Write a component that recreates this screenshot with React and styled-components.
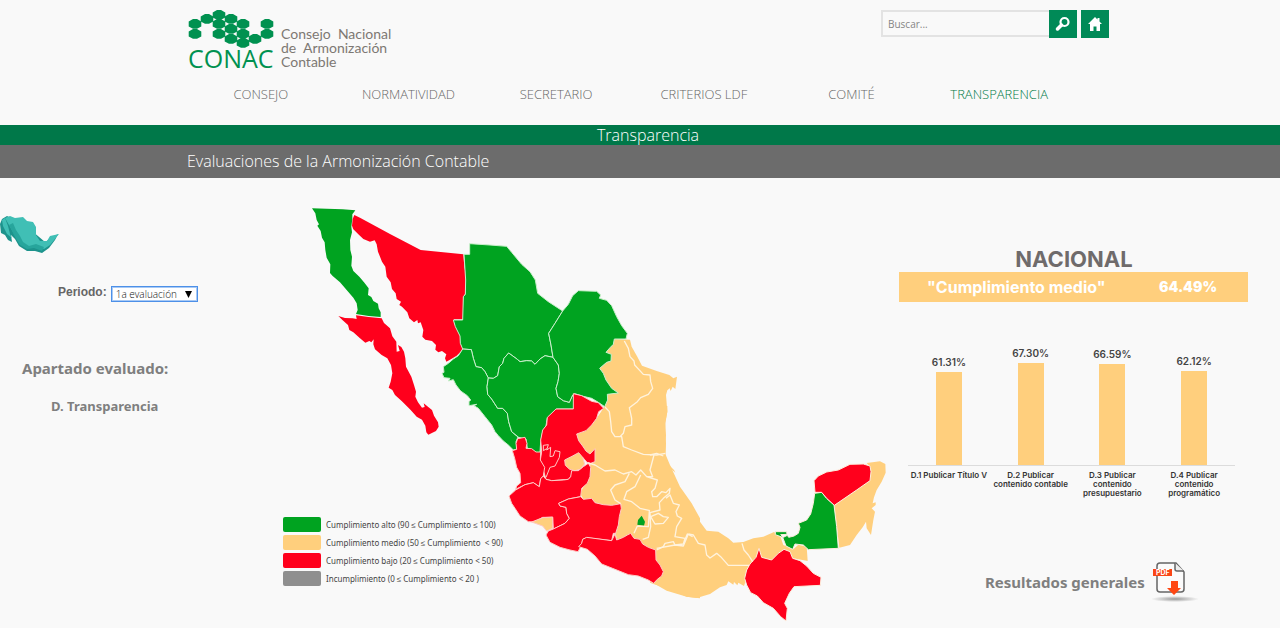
import React, { useState } from 'react'
import styled, { createGlobalStyle } from 'styled-components'

const GREEN = '#00a320'
const AMBER = '#ffcf7d'
const RED = '#ff001c'
const GREY = '#8f8f8f'

const GlobalStyle = createGlobalStyle`
  * { box-sizing: border-box; }

  body {
    margin: 0;
    background: #f9f9f9;
    color: #777;
    font-family: 'Open Sans', 'Noto Sans', sans-serif;
  }
`;

const Container = styled.div`
  max-width: 922px;
  margin: 0 auto;
`;

const HeaderStyles = styled.header`
  padding: 10px 0 0 16px;
  height: 125px;

  .top {
    display: flex;
    justify-content: space-between;
    align-items: flex-start;
  }
`;

const LogoLink = styled.a`
  display: flex;
  align-items: flex-end;
  gap: 7px;
  padding-left: 1px;
  text-decoration: none;
`;

const LogoMark = styled.span`
  display: flex;
  flex-direction: column;
  color: #009150;
  font-size: 25px;
  line-height: 21px;

  svg { display: block; }
`;

const LogoText = styled.span`
  padding-top: 17px;
  color: #7d7873;
  font-family: Lato, sans-serif;
  font-size: 14px;
  line-height: 14px;
  white-space: pre;
`;

const SearchForm = styled.form`
  display: flex;
  align-items: flex-start;

  input {
    width: 168px;
    height: 27px;
    padding: 0 5px;
    border: 2px solid #e3e3e3;
    border-right: 0;
    background: #f9f9f9;
    color: #777;
    font: 10px 'Open Sans', sans-serif;
  }

  input::placeholder { color: #858585; }
`;

const IconButton = styled.button`
  display: flex;
  align-items: center;
  justify-content: center;
  width: 28px;
  height: 28px;
  margin-right: ${props => props.$spaced ? '4px' : '0'};
  padding: 0;
  border: 0;
  background: #008a57;
  cursor: pointer;
`;

const Nav = styled.nav`
  display: grid;
  grid-template-columns: repeat(6, 1fr);
  margin: 15px 36px 0 0;
`;

const NavLink = styled.a`
  color: ${props => props.$active ? '#007a48' : '#666'};
  font-size: 13px;
  font-weight: 300;
  line-height: 20px;
  text-align: center;
  text-decoration: none;
`;

const TitleBar = styled.div`
  padding-left: 16px;
  background: #007849;
  color: #fff;
  font-size: 16px;
  font-weight: 300;
  line-height: 20px;
  text-align: center;
`;

const SubtitleBar = styled.div`
  padding-left: 16px;
  background: #6c6c6c;
  color: #fff;

  h1 {
    margin: 0;
    font-size: 16px;
    font-weight: 300;
    line-height: 33px;
  }
`;

const Main = styled.main`
  display: grid;
  grid-template-columns: 280px 1fr 380px;
`;

const Sidebar = styled.aside`
  padding-top: 37px;

  > svg { display: block; }

  h2 {
    margin: 56px 0 0 22px;
    color: #7f7f7f;
    font-family: 'Noto Sans', sans-serif;
    font-size: 15px;
    line-height: 20px;
  }

  p {
    margin: 20px 0 0 51px;
    color: #7f7f7f;
    font-family: 'Noto Sans', sans-serif;
    font-size: 13px;
    font-weight: bold;
    line-height: 16px;
  }
`;

const Period = styled.div`
  display: flex;
  align-items: flex-start;
  gap: 4px;
  margin: 26px 0 0 58px;

  label {
    color: #666;
    font: bold 12px/18px 'Liberation Sans', sans-serif;
  }
`;

const SelectBox = styled.div`
  position: relative;
  margin-top: 3px;

  select {
    display: block;
    width: 87px;
    height: 16px;
    padding: 0 4px;
    border: 1px solid #4d90e8;
    border-radius: 0;
    outline: 1px solid #a9caf5;
    outline-offset: -2px;
    background: #fff;
    color: #111;
    font: 300 10px/14px 'Open Sans', sans-serif;
    appearance: none;
  }

  svg {
    position: absolute;
    top: 5px;
    right: 6px;
    pointer-events: none;
  }
`;

const MapArea = styled.section`
  display: grid;
  align-content: start;
  padding-top: 22px;

  > * { grid-area: 1 / 1; }
  > svg { display: block; width: 100%; }
`;

const Legend = styled.ul`
  align-self: end;
  margin: 0 0 41px 3px;
  padding: 0;
  list-style: none;
  justify-self: start;

  li {
    display: flex;
    align-items: center;
    gap: 5px;
    height: 18px;
    color: #444;
    font: 8px 'Noto Sans', sans-serif;
    white-space: pre;
  }
`;

const Swatch = styled.span`
  width: 38px;
  height: 15px;
  border-radius: 2px;
  background: ${props => props.$color};
`;

const Results = styled.section`
  padding: 68px 32px 0 0;
  font-family: Inter, sans-serif;

  h2 {
    margin: 0;
    color: #6f6b6b;
    font-size: 22px;
    line-height: 26px;
    text-align: center;
  }
`;

const Banner = styled.div`
  display: flex;
  justify-content: space-between;
  padding: 0 31px 0 28px;
  margin-left: -1px;
  background: ${AMBER};
  color: #fff;
  font-size: 16px;
  font-weight: 700;
  line-height: 30px;

  strong { font-size: 14px; }
`;

const Chart = styled.div`
  display: grid;
  grid-template-columns: repeat(4, 1fr);
  margin: 11px 13px 0 8px;
`;

const Plot = styled.div`
  display: flex;
  flex-direction: column;
  align-items: center;
  justify-content: flex-end;
  height: 153px;
  border-bottom: 1px solid #dcdcdc;
  color: #444;
  font-size: 10px;
  font-weight: 600;
  line-height: 20px;
`;

const Bar = styled.div`
  width: 26px;
  background: ${AMBER};
`;

const BarLabel = styled.div`
  padding-top: 5px;
  color: #333;
  font-size: 8px;
  font-weight: 600;
  line-height: 9px;
  text-align: center;
  white-space: pre-line;
`;

const ReportLink = styled.a`
  display: flex;
  align-items: center;
  gap: 4px;
  margin: 62px 0 0 85px;
  color: #7f7f7f;
  font: bold 15px 'Noto Sans', sans-serif;
  text-decoration: none;

  svg { flex: none; }
`;

const hexagons = [
  [7, 14], [7, 24], [19, 9], [31, 5], [31, 14], [31, 24], [43, 9], [43, 19], [43, 29],
  [55, 14], [55, 24], [55, 33], [67, 29], [79, 14], [79, 24]
]

const sections = ['CONSEJO', 'NORMATIVIDAD', 'SECRETARIO', 'CRITERIOS LDF', 'COMITÉ', 'TRANSPARENCIA']

const levels = [
  { color: GREEN, text: 'Cumplimiento alto (90 ≤ Cumplimiento ≤ 100)' },
  { color: AMBER, text: 'Cumplimiento medio (50 ≤ Cumplimiento  < 90)' },
  { color: RED, text: 'Cumplimiento bajo (20 ≤ Cumplimiento < 50)' },
  { color: GREY, text: 'Incumplimiento (0 ≤ Cumplimiento < 20 )' }
]

const indicators = [
  { value: 61.31, text: 'D.1 Publicar Título V' },
  { value: 67.3, text: 'D.2 Publicar\ncontenido contable' },
  { value: 66.59, text: 'D.3 Publicar\ncontenido\npresupuestario' },
  { value: 62.12, text: 'D.4 Publicar\ncontenido\nprogramático' }
]

function Header() {
  return (
    <HeaderStyles>
      <Container>
        <div className="top">
          <LogoLink href="#" aria-label="CONAC">
            <LogoMark>
              <svg width="86" height="38" viewBox="0 0 86 38" fill="#009150">
                {hexagons.map(([x, y]) => (
                  <path key={`${x}-${y}`} d={`M${x - 2} ${y - 5}h4l4.300 2.500v5l-4.300 2.300h-4l-4.300 -2.300v-5z`} />
                ))}
              </svg>
              CONAC
            </LogoMark>
            <LogoText>{'Consejo  Nacional\nde  Armonización\nContable'}</LogoText>
          </LogoLink>

          <SearchForm onSubmit={e => e.preventDefault()}>
            <input type="text" placeholder="Buscar..." aria-label="Buscar" />
            <IconButton type="submit" aria-label="Buscar" $spaced>
              <svg width="16" height="16" viewBox="0 0 16 16" fill="none" stroke="#fff">
                <circle cx="9.500" cy="6" r="4" strokeWidth="2.200" />
                <path d="M6.500 9L2.500 13" strokeWidth="3.500" strokeLinecap="round" />
              </svg>
            </IconButton>
            <IconButton type="button" aria-label="Inicio">
              <svg width="16" height="16" viewBox="0 0 16 16" fill="#fff">
                <path d="M8 1L1 8h2v7h3.500v-4.500h3V15H13V8h2l-2.500-2.500V2h-2v1.500z" />
              </svg>
            </IconButton>
          </SearchForm>
        </div>

        <Nav>
          {sections.map(name => (
            <NavLink key={name} href="#" $active={name === 'TRANSPARENCIA'}>{name}</NavLink>
          ))}
        </Nav>
      </Container>
    </HeaderStyles>
  )
}

// Each group keeps its own origin, three units to the pixel.
function MexicoMap() {
  return (
    <svg viewBox="840 600 1860 1284" strokeLinejoin="round" role="img" aria-label="Mapa de México">
      {/* amber states */}
      <g fill={AMBER}>
        <path transform="translate(1290 705)" d="M553 312L600 314L605 335L622 365L636 392L680 408L718 420L730 430L741 425L736 462L728 455L722 468L719 460L712 466L708 480L712 530L706 560L704 600L708 625L706 665L500 665L450 610L440 597L495 565L524 515L533 495L532 478L565 474L545 460L528 435L520 415L509 400L530 382L543 378L544 358L528 352L540 338L550 328Z" />
        <path transform="translate(1500 1140)" d="M315 78L502 78L502 95L496 130L498 165L496 222L510 255L540 320L575 370L600 415L600 655L560 650L500 632L461 610L440 560L350 482L347 455L364 372L335 376L310 374L285 368L275 355L250 358L240 340L262 300L272 250L285 245L285 206L270 222L258 213L248 198L236 182L230 162L258 152L290 115Z" />
        <path transform="translate(1950 1320)" d="M0 0L45 0L45 30L40 42L60 95L90 148L125 195L135 225L170 272L205 275L235 295L250 308L280 306L310 295L340 290L372 276L392 292L400 315L430 328L445 314L470 320L473 363L430 355L340 380L295 378L288 420L282 438L265 428L262 436L252 426L250 434L235 424L230 435L210 442L180 462L140 474L110 470L60 448L10 432L0 428Z" />
        <path transform="translate(1950 1320)" d="M650 69L690 64L706 72L707 98L695 125L680 150L672 172L668 190L677 187L677 195L665 205L675 215L670 240L663 285L650 265L648 245L638 262L620 285L600 315L568 323L553 196L620 150L660 122L660 80Z" />
        <path transform="translate(1950 1320)" d="M52 70L72 90L76 98L60 84Z" />
      </g>

      {/* north-west */}
      <g transform="translate(900 585)">
        <path fill={GREEN} d="M36 40L80 41L128 43L166 46L157 58L157 72L154 95L156 112L150 135L151 165L156 185L154 212L160 228L178 245L192 262L206 280L204 300L214 306L220 318L234 326L236 340L242 352L242 366L206 363L168 357L173 345L170 325L160 308L140 285L120 262L98 243L90 234L91 208L80 188L76 165L74 142L66 128L62 108L52 92L57 88L50 75L46 55Z" />
        <path fill={RED} d="M115 363L135 369L158 370L170 372L168 361L206 366L245 370L252 384L270 400L277 424L289 440L290 470L299 468L294 450L304 456L312 470L316 490L318 515L334 545L342 570L348 590L346 605L354 622L366 638L374 636L371 625L382 634L396 645L402 662L414 682L416 695L408 708L385 719L379 712L376 692L366 674L350 665L332 645L305 618L285 600L277 585L266 578L272 560L277 535L273 510L262 490L245 480L225 463L220 448L221 433L214 442L208 438L196 443L180 430L160 412L148 405L144 390L128 376Z" />
        <path fill={RED} d="M158 72L163 60L180 68L270 117L362 165L490 178L493 215L498 240L497 270L495 296L490 305L490 373L462 373L462 385L472 400L480 420L482 446L489 459L482 470L470 482L450 494L439 500L435 490L439 478L426 468L415 472L406 464L408 450L396 438L376 434L367 425L370 405L362 382L354 385L352 375L342 382L328 370L322 352L306 335L298 330L303 320L290 312L287 295L276 282L272 262L260 245L256 215L246 200L234 170L230 148L224 136L210 140L190 132L175 118L160 103L156 92Z" />
      </g>

      {/* north */}
      <g transform="translate(1290 705)" fill={GREEN} stroke="#c9efcb" strokeWidth="3">
        <path d="M119 26L180 30L230 34L245 52L275 88L300 110L316 135L323 175L355 200L398 228L375 265L356 295L363 330L369 367L345 362L330 372L315 388L305 378L290 377L270 380L262 373L236 354L222 370L218 385L208 395L203 422L190 430L175 429L165 410L155 398L138 395L130 370L124 344L98 342L91 325L90 303L76 275L70 255L98 255L100 185L106 178L107 135L102 58L119 58Z" />
        <path d="M98 342L124 344L130 370L138 395L155 398L165 410L175 429L171 455L173 478L185 492L203 520L218 520L232 535L236 560L245 590L264 606L258 620L262 642L250 645L235 630L220 618L205 602L195 590L185 570L165 545L145 520L132 512L140 508L117 512L117 500L122 495L112 482L92 468L78 450L70 434L55 438L60 430L42 428L36 415L42 412L40 395L55 385L70 372L85 362Z" />
        <path d="M175 429L190 430L203 422L208 395L218 385L222 370L236 354L262 373L270 380L290 377L305 378L315 388L330 372L345 362L369 367L385 390L388 415L384 440L378 460L383 485L400 497L418 502L428 480L434 476L437 522L380 522L352 548L348 572L338 590L332 620L330 652L318 655L305 645L292 640L288 612L266 607L245 590L236 560L232 535L218 520L203 520L185 492L173 478L171 455Z" />
        <path d="M398 228L415 208L428 182L445 167L500 169L512 180L508 190L530 196L545 212L560 245L575 272L592 295L588 312L553 312L550 328L540 338L528 352L544 358L543 378L530 382L509 400L520 415L528 435L545 460L565 474L532 478L533 495L524 515L505 502L485 490L460 484L434 476L428 480L418 502L400 497L383 485L378 460L384 440L388 415L385 390L369 367L363 330L356 295L375 265Z" />
      </g>

      {/* west and centre */}
      <g transform="translate(1500 1140)" fill={RED} stroke="#ffc9c4" strokeWidth="3">
        <path d="M220 41L245 47L275 64L295 68L311 85L296 95L290 115L275 135L258 152L230 162L236 182L248 198L258 213L270 222L285 206L285 245L272 250L262 248L248 232L212 290L205 298L155 302L138 298L121 240L125 215L122 180L128 150L140 135L142 112L168 87L220 87Z" />
        <path d="M53 176L75 172L81 190L78 205L95 206L108 216L122 216L121 240L134 262L130 288L122 296L118 320L100 308L75 314L47 328L50 318L62 308L60 280L50 262L44 235L37 212L50 208L48 190Z" />
        <path d="M118 320L122 296L130 288L138 298L155 302L190 300L205 298L212 290L215 272L235 272L250 260L265 250L272 262L270 290L262 310L245 325L242 350L205 357L176 370L180 378L198 382L200 400L208 415L195 430L160 447L158 412L128 412L105 426L85 425L60 408L45 385L35 370L27 348L47 330L75 314L100 308Z" />
        <path d="M138 465L145 453L160 447L195 430L208 415L200 400L198 382L180 378L176 370L205 357L242 350L250 358L275 355L285 368L310 374L335 376L362 371L364 385L358 410L355 435L347 460L340 460L335 482L260 473L248 478L245 495L234 515L210 510L180 502L150 487Z" />
        <path d="M236 500L245 490L248 478L260 472L335 482L345 462L350 480L370 472L382 465L392 460L402 475L420 478L428 492L445 502L467 510L468 540L480 555L490 575L485 588L472 598L461 610L445 600L415 588L385 584L345 568L305 552L285 528L262 508Z" />
        <path fill={AMBER} d="M95 426L128 413L158 411L158 445L140 453L128 438Z" />
        <path fill={AMBER} d="M194 240L216 229L236 218L248 232L254 252L240 268L225 272L209 268L196 256Z" />
        <path fill="none" d="M138 292L150 262L165 258L178 232L180 215L165 212L160 228L150 230L152 202L140 210L145 194L130 196L130 212L140 206" />
        <path fill={GREEN} stroke="none" d="M425 407L435 425L432 437L412 434L414 420Z" />
      </g>

      {/* south-east */}
      <g transform="translate(1950 1320)" stroke="#fdeedd" strokeWidth="3">
        <path fill={RED} d="M327 325L335 352L365 360L385 340L402 328L420 335L428 355L450 362L470 378L490 400L513 412L511 436L432 440L418 460L404 490L412 505L408 543L392 530L370 505L340 488L322 468L302 458L290 435L284 415L290 390L300 372L318 352Z" />
        <path fill={GREEN} d="M494 160L515 157L530 175L552 195L560 260L565 325L475 329L460 315L435 312L428 328L408 318L398 292L376 284L376 275L410 275L411 283L392 284L400 292L412 286L416 292L432 288L445 280L450 262L445 250L470 240L482 222L490 190Z" />
        <path fill={RED} d="M492 122L505 108L530 96L565 90L600 73L640 72L660 78L663 95L660 122L620 150L553 196L530 175L515 157L495 157Z" />
      </g>

      {/* borders between amber states */}
      <g fill="none" stroke="#fff3de" strokeWidth="4">
        <path transform="translate(1290 705)" d="M583 318L595 340L600 365L612 378L614 390L640 418L660 420L662 440L668 460L655 478L632 488L622 500L598 518L605 550L605 570L585 575L580 595L570 605M525 516L538 530L542 560L545 590L555 605L575 605L580 635L605 645L640 658L680 660L706 655" />
        <path transform="translate(1500 1140)" d="M262 248L285 255L315 273L345 270L370 282L395 275L408 285L422 270L440 290L458 290L450 270L462 225M388 280L375 305L345 315L332 330L345 360L362 371M422 285L405 320L380 335L372 358L395 365L420 385L450 392M440 290L472 300L465 325L455 335L458 350L470 350L485 335L498 338L510 325L508 340L490 355L478 368L480 390L450 398L452 440L445 472L428 478M498 355L510 345L520 370L538 375L528 395L532 408L545 415L530 440L525 470L555 475L550 492L525 495L520 485L495 490L490 500L470 510M550 492L562 462L578 470M452 410L475 400L490 410L505 412L490 430L465 432ZM412 438L402 460M448 392L445 440L412 438" />
        <path transform="translate(1950 1320)" d="M115 282L130 285L145 310L165 315L170 345L180 354L200 340L212 350L235 376L297 376M276 310L282 330L295 345L308 365M0 45L20 40L40 48M20 325L75 315L100 318L115 282" />
      </g>
    </svg>
  )
}

function MiniMap() {
  return (
    <svg width="60" height="42" viewBox="0 0 60 42" aria-hidden="true">
      <path fill="#1d938c" d="M7 1L2 4L0 9L1 18L5 20L8 25L12 27L11 20L15 24L19 31L27 36L35 36L42 38L49 33L55 25L58 19L45 27L25 10Z" />
      <path fill="#40bfb5" d="M5 3L10 1L15 3L23 2L27 6L33 7L36 12L36 20L40 26L47 26L50 21L59 19L55 24L50 30L44 34L36 31L29 33L22 30L18 25L13 17L9 10Z" />
      <path fill="#27a59c" d="M9 10L13 8L16 15L20 21L23 27L29 31L36 29L44 32L42 36L34 33L27 34L20 30L15 22Z" />
      <path fill="#40bfb5" d="M2 5L5 3L8 11L10 19L12 23L7 19L3 11Z" />
    </svg>
  )
}

function PdfIcon() {
  return (
    <svg width="50" height="44" viewBox="0 0 50 44" aria-hidden="true">
      <defs>
        <radialGradient id="shade">
          <stop offset="0" stopColor="#999" />
          <stop offset="1" stopColor="#f9f9f9" />
        </radialGradient>
      </defs>
      <ellipse cx="26" cy="39" rx="24" ry="3" fill="url(#shade)" />
      <path d="M11 3H27L35 12V29Q35 32 32 32H11Q8 32 8 29V6Q8 3 11 3Z" fill="#fbfbfb" stroke="#666" strokeWidth="1.500" />
      <path d="M26 3V9Q26 11 28 11H35" fill="#eee" stroke="#666" strokeWidth="1.500" />
      <rect x="4" y="9" width="19" height="7" fill="#fa4616" />
      <text x="7" y="15" fill="#fff" fontFamily="Inter" fontSize="7" fontWeight="700">PDF</text>
      <path d="M22 21H29V28H32L25 35L18 28H22Z" fill="#ff4713" />
    </svg>
  )
}

export default function App() {
  const [period, setPeriod] = useState('1')

  return (
    <>
      <GlobalStyle />
      <Header />

      <TitleBar>
        <Container>Transparencia</Container>
      </TitleBar>
      <SubtitleBar>
        <Container><h1>Evaluaciones de la Armonización Contable</h1></Container>
      </SubtitleBar>

      <Main>
        <Sidebar>
          <MiniMap />
          <Period>
            <label htmlFor="period">Periodo:</label>
            <SelectBox>
              <select id="period" value={period} onChange={e => setPeriod(e.target.value)}>
                <option value="1">1a evaluación</option>
                <option value="2">2a evaluación</option>
              </select>
              <svg width="7" height="7" viewBox="0 0 7 7"><path d="M0 0H7L3.500 7Z" /></svg>
            </SelectBox>
          </Period>
          <h2>Apartado evaluado:</h2>
          <p>D. Transparencia</p>
        </Sidebar>

        <MapArea>
          <MexicoMap />
          <Legend>
            {levels.map(level => (
              <li key={level.color}><Swatch $color={level.color} />{level.text}</li>
            ))}
          </Legend>
        </MapArea>

        <Results>
          <h2>NACIONAL</h2>
          <Banner>
            <span>"Cumplimiento medio"</span>
            <strong>64.49%</strong>
          </Banner>

          <Chart>
            {indicators.map(({ value, text }) => (
              <div key={text}>
                <Plot>
                  {value.toFixed(2)}%
                  <Bar style={{ height: `${value}%` }} />
                </Plot>
                <BarLabel>{text}</BarLabel>
              </div>
            ))}
          </Chart>

          <ReportLink href="#">
            Resultados generales
            <PdfIcon />
          </ReportLink>
        </Results>
      </Main>
    </>
  )
}
